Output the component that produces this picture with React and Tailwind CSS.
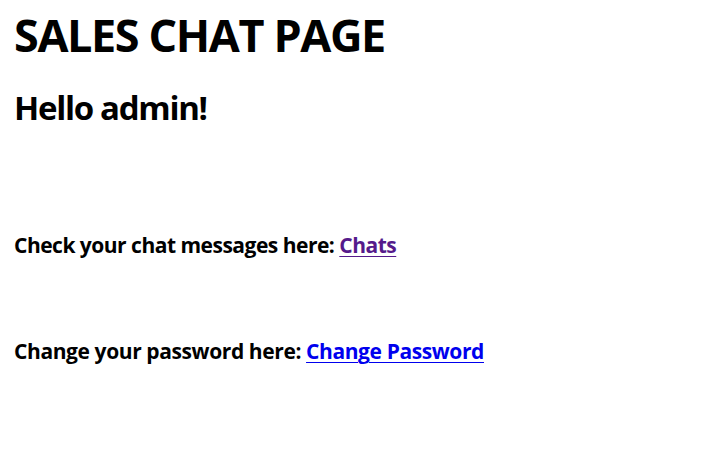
export default function App() {
  return (
    <div className="min-h-screen bg-white text-black px-[14px] font-['Open_Sans',sans-serif]">
      <h1 className="pt-[7px] text-[45px] font-bold leading-[56px] tracking-[-1.4px]">SALES CHAT PAGE</h1>
      <h2 className="mt-[25px] text-[33px] font-bold leading-[40px] tracking-[-1.3px]">Hello admin!</h2>
      <p className="mt-[103px] text-[21px] font-bold leading-[28px] tracking-[-0.5px]">
        Check your chat messages here:{' '}
        <a href="#" className="text-[#551a8b] underline decoration-1 underline-offset-[3px]">Chats</a>
      </p>
      <p className="mt-[78px] text-[21px] font-bold leading-[28px] tracking-[-0.4px]">
        Change your password here:{' '}
        <a href="#" className="text-[#0000ee] underline decoration-1 underline-offset-[3px]">Change Password</a>
      </p>
    </div>
  )
}
